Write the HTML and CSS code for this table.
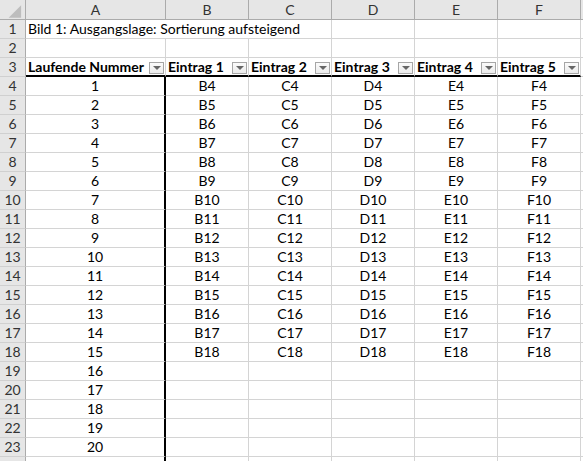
FILE: index.html
```html
<!DOCTYPE html>
<html lang="de">
<head>
<meta charset="utf-8">
<title>Tabelle</title>
<link rel="stylesheet" href="styles.css">
</head>
<body>
<div class="sheet">
  <div class="c ch corner"><svg width="26" height="20" viewBox="0 0 26 20"><polygon points="22,5 22,18 9,18" fill="#bdbdbd"/></svg></div>
  <div class="c ch">A</div><div class="c ch">B</div><div class="c ch">C</div><div class="c ch">D</div><div class="c ch">E</div><div class="c ch">F</div><div class="c ch edge"></div>

  <div class="c rh">1</div><div class="c title">Bild 1: Ausgangslage: Sortierung aufsteigend</div><div class="c"></div><div class="c"></div><div class="c"></div><div class="c edge"></div>

  <div class="c rh">2</div><div class="c"></div><div class="c"></div><div class="c"></div><div class="c"></div><div class="c"></div><div class="c"></div><div class="c edge"></div>

  <div class="c rh">3</div>
  <div class="c th">Laufende Nummer<span class="dd"></span></div>
  <div class="c th">Eintrag 1<span class="dd"></span></div>
  <div class="c th">Eintrag 2<span class="dd"></span></div>
  <div class="c th">Eintrag 3<span class="dd"></span></div>
  <div class="c th">Eintrag 4<span class="dd"></span></div>
  <div class="c th">Eintrag 5<span class="dd"></span></div>
  <div class="c edge"></div>

  <div class="c rh">4</div><div class="c a">1</div><div class="c">B4</div><div class="c">C4</div><div class="c">D4</div><div class="c">E4</div><div class="c">F4</div><div class="c edge"></div>
  <div class="c rh">5</div><div class="c a">2</div><div class="c">B5</div><div class="c">C5</div><div class="c">D5</div><div class="c">E5</div><div class="c">F5</div><div class="c edge"></div>
  <div class="c rh">6</div><div class="c a">3</div><div class="c">B6</div><div class="c">C6</div><div class="c">D6</div><div class="c">E6</div><div class="c">F6</div><div class="c edge"></div>
  <div class="c rh">7</div><div class="c a">4</div><div class="c">B7</div><div class="c">C7</div><div class="c">D7</div><div class="c">E7</div><div class="c">F7</div><div class="c edge"></div>
  <div class="c rh">8</div><div class="c a">5</div><div class="c">B8</div><div class="c">C8</div><div class="c">D8</div><div class="c">E8</div><div class="c">F8</div><div class="c edge"></div>
  <div class="c rh">9</div><div class="c a">6</div><div class="c">B9</div><div class="c">C9</div><div class="c">D9</div><div class="c">E9</div><div class="c">F9</div><div class="c edge"></div>
  <div class="c rh">10</div><div class="c a">7</div><div class="c">B10</div><div class="c">C10</div><div class="c">D10</div><div class="c">E10</div><div class="c">F10</div><div class="c edge"></div>
  <div class="c rh">11</div><div class="c a">8</div><div class="c">B11</div><div class="c">C11</div><div class="c">D11</div><div class="c">E11</div><div class="c">F11</div><div class="c edge"></div>
  <div class="c rh">12</div><div class="c a">9</div><div class="c">B12</div><div class="c">C12</div><div class="c">D12</div><div class="c">E12</div><div class="c">F12</div><div class="c edge"></div>
  <div class="c rh">13</div><div class="c a">10</div><div class="c">B13</div><div class="c">C13</div><div class="c">D13</div><div class="c">E13</div><div class="c">F13</div><div class="c edge"></div>
  <div class="c rh">14</div><div class="c a">11</div><div class="c">B14</div><div class="c">C14</div><div class="c">D14</div><div class="c">E14</div><div class="c">F14</div><div class="c edge"></div>
  <div class="c rh">15</div><div class="c a">12</div><div class="c">B15</div><div class="c">C15</div><div class="c">D15</div><div class="c">E15</div><div class="c">F15</div><div class="c edge"></div>
  <div class="c rh">16</div><div class="c a">13</div><div class="c">B16</div><div class="c">C16</div><div class="c">D16</div><div class="c">E16</div><div class="c">F16</div><div class="c edge"></div>
  <div class="c rh">17</div><div class="c a">14</div><div class="c">B17</div><div class="c">C17</div><div class="c">D17</div><div class="c">E17</div><div class="c">F17</div><div class="c edge"></div>
  <div class="c rh">18</div><div class="c a">15</div><div class="c">B18</div><div class="c">C18</div><div class="c">D18</div><div class="c">E18</div><div class="c">F18</div><div class="c edge"></div>
  <div class="c rh">19</div><div class="c a">16</div><div class="c"></div><div class="c"></div><div class="c"></div><div class="c"></div><div class="c"></div><div class="c edge"></div>
  <div class="c rh">20</div><div class="c a">17</div><div class="c"></div><div class="c"></div><div class="c"></div><div class="c"></div><div class="c"></div><div class="c edge"></div>
  <div class="c rh">21</div><div class="c a">18</div><div class="c"></div><div class="c"></div><div class="c"></div><div class="c"></div><div class="c"></div><div class="c edge"></div>
  <div class="c rh">22</div><div class="c a">19</div><div class="c"></div><div class="c"></div><div class="c"></div><div class="c"></div><div class="c"></div><div class="c edge"></div>
  <div class="c rh">23</div><div class="c a">20</div><div class="c"></div><div class="c"></div><div class="c"></div><div class="c"></div><div class="c"></div><div class="c edge"></div>
  <div class="c rh"></div><div class="c a"></div><div class="c"></div><div class="c"></div><div class="c"></div><div class="c"></div><div class="c"></div><div class="c edge"></div>
</div>
</body>
</html>
```

FILE: styles.css
```css
html, body {
  margin: 0;
  padding: 0;
  background: #ffffff;
}
body {
  width: 583px;
  height: 461px;
  overflow: hidden;
  font-family: Lato, "Liberation Sans", sans-serif;
  font-size: 14px;
  color: #000;
}
.sheet {
  display: grid;
  grid-template-columns: 26px 140px 83px 83px 83px 83px 83px 3px;
  grid-template-rows: 20px;
  grid-auto-rows: 19px;
}
.c {
  box-sizing: border-box;
  border-right: 1px solid #d4d4d4;
  border-bottom: 1px solid #d4d4d4;
  display: flex;
  align-items: flex-end;
  justify-content: center;
  padding-bottom: 2px;
  white-space: nowrap;
  line-height: 14px;
}
.edge {
  border-right: none;
}
.ch {
  background: #e6e6e6;
  color: #333;
  border-right-color: #ababab;
  border-bottom-color: #ababab;
  align-items: center;
  padding-bottom: 0;
}
.ch.edge {
  border-right: none;
}
.corner {
  padding: 0;
  align-items: stretch;
  justify-content: flex-start;
}
.rh {
  background: #e6e6e6;
  color: #333;
  border-right-color: #ababab;
  border-bottom-color: #d0d0d0;
}
.title {
  grid-column: span 3;
  justify-content: flex-start;
  padding-left: 2px;
}
.th {
  font-weight: 700;
  justify-content: flex-start;
  padding-left: 2px;
  padding-right: 1px;
  border-bottom: 2px solid #000;
  padding-bottom: 1px;
}
.dd {
  margin-left: auto;
  width: 15px;
  height: 12px;
  box-sizing: border-box;
  border: 1px solid #a6a6a6;
  background: linear-gradient(#fbfbfb, #ececec);
  display: flex;
  align-items: center;
  justify-content: center;
}
.dd::after {
  content: "";
  width: 0;
  height: 0;
  border-left: 4px solid transparent;
  border-right: 4px solid transparent;
  border-top: 4px solid #666;
}
.a {
  border-right: 2px solid #000;
}
```
